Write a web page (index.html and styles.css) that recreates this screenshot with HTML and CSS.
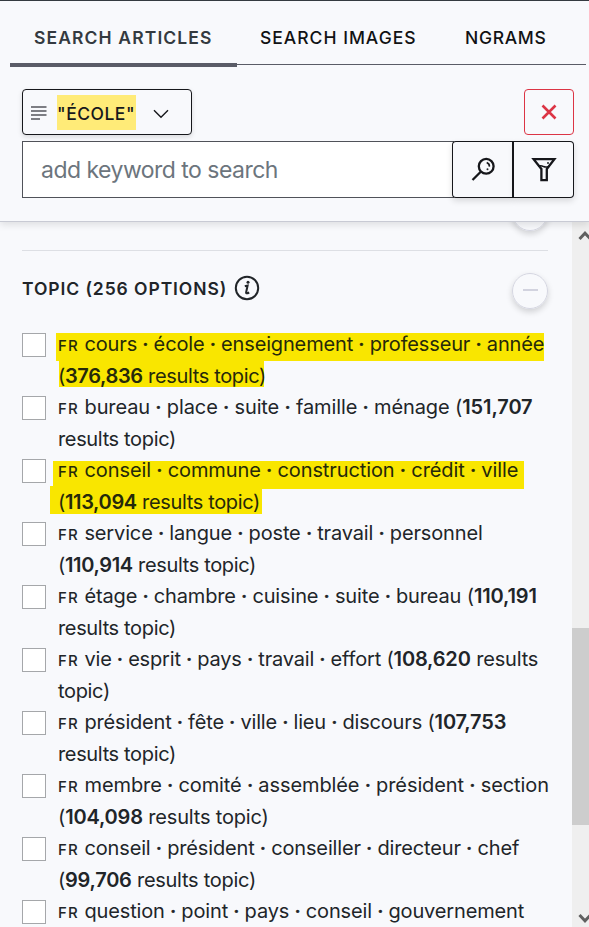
FILE: index.html
```html
<!DOCTYPE html>
<html lang="en">
<head>
<meta charset="utf-8">
<title>Search articles</title>
<link rel="stylesheet" href="styles.css">
</head>
<body>
<header class="header">
  <nav class="tabs">
    <a class="tab tab-active">SEARCH ARTICLES</a>
    <a class="tab tab-images">SEARCH IMAGES</a>
    <a class="tab tab-ngrams">NGRAMS</a>
  </nav>
  <div class="filters">
    <button class="pill">
      <svg class="pill-lines" width="16" height="14" viewBox="0 0 16 14"><path d="M0 1H15.5M0 5H15.5M0 9H15.5M0 13H9"/></svg>
      <span class="pill-text">"ÉCOLE"</span>
      <svg class="chevron" width="16" height="10" viewBox="0 0 16 10"><path d="M1 1.2L8 8.2L15 1.2"/></svg>
    </button>
    <button class="clear"><svg width="16" height="16" viewBox="0 0 16 16"><path d="M1.5 1.5L14.5 14.5M14.5 1.5L1.5 14.5"/></svg></button>
  </div>
  <div class="search">
    <div class="input">add keyword to search</div>
    <button class="action">
      <svg width="26" height="26" viewBox="0 0 26 26"><circle cx="16.2" cy="9.3" r="7.4"/><path d="M11 14.5L2.5 23"/><path class="fine" d="M16.7 5.4Q19.9 6.8 19.3 9.6"/><circle class="dot" cx="17.5" cy="12.3" r="1"/></svg>
    </button>
    <button class="action action-filter">
      <svg width="26" height="26" viewBox="0 0 26 26"><path d="M2.6 2.2H23.4L15.8 12V23.2H10.4V12Z"/><path class="fine" d="M7 9.2Q10 8 12.5 9.6Q15 10.6 18 9.4"/><circle class="dot" cx="17" cy="6" r="1"/></svg>
    </button>
  </div>
</header>
<div class="body">
  <main class="content">
    <div class="previous"><span class="round"></span></div>
    <div class="title-row">
      <h2 class="title">TOPIC (256 OPTIONS)</h2>
      <svg class="info" width="26" height="26" viewBox="0 0 26 26"><circle cx="13" cy="13" r="11.2"/><circle class="dot" cx="14" cy="7.3" r="1.5"/><path d="M10.8 11.2L13.6 10.5L12.1 17.5Q12 19.2 15.2 17.5"/></svg>
      <span class="round round-toggle"><i class="minus"></i></span>
    </div>
    <ul class="topics">
      <li class="topic"><i class="box"></i><div class="label marked-a"><span class="line"><small>FR</small> cours <i>·</i> école <i>·</i> enseignement <i>·</i> professeur <i>·</i> année</span><span class="line tight">(<b>376,836</b> results topic)</span></div></li>
      <li class="topic"><i class="box"></i><div class="label"><span class="line loose"><small>FR</small> bureau <i>·</i> place <i>·</i> suite <i>·</i> famille <i>·</i> ménage (<b>151,707</b></span><span class="line tight">results topic)</span></div></li>
      <li class="topic"><i class="box"></i><div class="label marked-b"><span class="line loose"><small>FR</small> conseil <i>·</i> commune <i>·</i> construction <i>·</i> crédit <i>·</i> ville</span><span class="line tight">(<b>113,094</b> results topic)</span></div></li>
      <li class="topic"><i class="box"></i><div class="label"><span class="line"><small>FR</small> service <i>·</i> langue <i>·</i> poste <i>·</i> travail <i>·</i> personnel</span><span class="line tight">(<b>110,914</b> results topic)</span></div></li>
      <li class="topic"><i class="box"></i><div class="label"><span class="line"><small>FR</small> étage <i>·</i> chambre <i>·</i> cuisine <i>·</i> suite <i>·</i> bureau (<b>110,191</b></span><span class="line tight">results topic)</span></div></li>
      <li class="topic"><i class="box"></i><div class="label"><span class="line snug"><small>FR</small> vie <i>·</i> esprit <i>·</i> pays <i>·</i> travail <i>·</i> effort (<b>108,620</b> results</span><span class="line tight">topic)</span></div></li>
      <li class="topic"><i class="box"></i><div class="label"><span class="line snug"><small>FR</small> président <i>·</i> fête <i>·</i> ville <i>·</i> lieu <i>·</i> discours (<b>107,753</b></span><span class="line tight">results topic)</span></div></li>
      <li class="topic"><i class="box"></i><div class="label"><span class="line loose"><small>FR</small> membre <i>·</i> comité <i>·</i> assemblée <i>·</i> président <i>·</i> section</span><span class="line snug">(<b>104,098</b> results topic)</span></div></li>
      <li class="topic"><i class="box"></i><div class="label"><span class="line"><small>FR</small> conseil <i>·</i> président <i>·</i> conseiller <i>·</i> directeur <i>·</i> chef</span><span class="line medium">(<b>99,706</b> results topic)</span></div></li>
      <li class="topic"><i class="box"></i><div class="label"><span class="line"><small>FR</small> question <i>·</i> point <i>·</i> pays <i>·</i> conseil <i>·</i> gouvernement</span></div></li>
    </ul>
  </main>
  <aside class="scrollbar">
    <svg class="arrow" width="17" height="12" viewBox="0 0 17 12"><path d="M7.5 10L13 4.2L18.5 10"/></svg>
    <div class="thumb"></div>
    <svg class="arrow arrow-down" width="17" height="12" viewBox="0 0 17 12"><path d="M7.5 3L13 8.8L18.5 3"/></svg>
  </aside>
</div>
</body>
</html>
```
FILE: styles.css
```css
* { box-sizing: border-box; }
body {
  margin: 0;
  height: 927px;
  overflow: hidden;
  display: flex;
  flex-direction: column;
  background: #f8f9fc;
  color: #212529;
  font-family: Inter, sans-serif;
}
svg { display: block; fill: none; stroke: #16171b; }
svg .dot { fill: #212529; stroke: none; }
button { font: inherit; color: inherit; margin: 0; padding: 0; background: #f8f9fc; }

.header {
  position: relative;
  z-index: 1;
  flex: none;
  height: 222px;
  padding-left: 10px;
  border-top: 1px solid #343a40;
  border-bottom: 1px solid #c8cad4;
  background: #f8f9fc;
  box-shadow: 0 3px 7px rgba(0, 0, 0, .1);
}
.tabs {
  display: flex;
  width: 576px;
  height: 64px;
  border-bottom: 1px solid #5a5c67;
  color: #111214;
  font-size: 17.5px;
  font-weight: 500;
  line-height: 74px;
  white-space: nowrap;
}
.tab { height: 66px; }
.tab-active {
  width: 227px;
  padding-left: 24px;
  border-bottom: 4px solid #5a5c67;
  color: #343a40;
  font-weight: 600;
  letter-spacing: 1.12px;
}
.tab-images { width: 204px; padding-left: 23px; letter-spacing: 1px; }
.tab-ngrams { padding-left: 24px; letter-spacing: .68px; }

.filters {
  display: flex;
  justify-content: space-between;
  margin: 24px 15px 0 12px;
}
.pill {
  display: flex;
  align-items: center;
  width: 170px;
  height: 46px;
  padding-left: 8px;
  border: 1px solid #16171b;
  border-radius: 4px;
  box-shadow: 0 2px 5px rgba(0, 0, 0, .13);
}
.pill-lines { margin-top: 2px; stroke: #54565c; stroke-width: 1.4; }
.pill-text {
  width: 79px;
  height: 35px;
  margin-left: 10px;
  background: #ffeb78;
  color: #16171b;
  font-size: 17.5px;
  font-weight: 500;
  line-height: 37px;
  letter-spacing: .5px;
  text-align: left;
}
.chevron { margin: 4px 0 0 17px; stroke-width: 1.4; }
.clear {
  display: grid;
  place-items: center;
  width: 50px;
  height: 46px;
  border: 1px solid #dc3545;
  border-radius: 4px;
}
.clear svg { stroke: #dc3545; stroke-width: 2.6; }

.search { display: flex; margin: 6px 15px 0 12px; }
.input {
  width: 432px;
  height: 57px;
  padding-left: 18px;
  border: 1px solid #505259;
  background: #fff;
  color: #6c757d;
  font-size: 23px;
  line-height: 56px;
  letter-spacing: -.52px;
}
.action {
  display: grid;
  place-items: center;
  width: 62px;
  height: 57px;
  margin-left: -2px;
  border: 1px solid #16171b;
  border-right-width: 2px;
  border-radius: 4px 0 0 4px;
  box-shadow: 0 3px 6px rgba(0, 0, 0, .13);
}
.action svg { stroke-width: 2.3; }
.action svg .fine { stroke-width: 1.6; }
.action-filter { width: 60px; margin-left: 0; border-left: 0; border-right-width: 1px; border-radius: 0 4px 4px 0; }

.body { display: flex; flex: 1; min-height: 0; }
.content { width: 572px; padding: 0 24px 0 22px; overflow: hidden; }
.previous {
  display: flex;
  align-items: flex-end;
  justify-content: flex-end;
  height: 29px;
  padding-bottom: 19px;
  border-bottom: 1px solid #dddfe4;
}
.round {
  flex: none;
  display: grid;
  place-items: center;
  width: 36px;
  height: 36px;
  border: 1px solid #d5d6e1;
  border-radius: 50%;
  box-shadow: 0 3px 6px rgba(0, 0, 0, .16);
}
.round-toggle { margin-left: auto; margin-top: 6px; }
.minus { width: 15px; height: 2px; margin-top: -2px; background: #d2d3df; }
.title-row { display: flex; align-items: center; height: 74px; }
.title {
  margin: 0;
  width: 212px;
  font-size: 17.5px;
  font-weight: 600;
  letter-spacing: .92px;
  white-space: nowrap;
}
.info { stroke: #212529; stroke-width: 2; }

.topics { list-style: none; margin: 4px 0 0; padding: 0; }
.topic { display: flex; height: 63px; }
.box {
  flex: none;
  width: 24px;
  height: 24px;
  margin-top: 4px;
  border: 1px solid #a5a7aa;
  background: #fff;
}
.label {
  position: relative;
  z-index: 0;
  width: 490px;
  margin-left: 12px;
  font-size: 20px;
  line-height: 31px;
}
.label small { font-size: 15px; font-weight: 500; letter-spacing: 1.2px; }
.label b { font-weight: 600; }
.label i { font-style: normal; -webkit-text-stroke: .7px; }
.line { display: block; white-space: nowrap; letter-spacing: -.148px; }
.loose { letter-spacing: -.1px; }
.snug { letter-spacing: -.175px; }
.medium { letter-spacing: -.27px; }
.tight { letter-spacing: -.35px; }

/* highlighter strokes behind the two selected topics */
.marked-a, .marked-b { color: #25290a; }
.marked-a::before, .marked-a::after,
.marked-b::before, .marked-b::after {
  content: "";
  position: absolute;
  z-index: -1;
  background: #f9e600;
}
.marked-a::before { left: -2px; top: 4px; width: 488px; height: 28px; }
.marked-a::after { left: 1px; top: 31px; width: 205px; height: 27px; }
.marked-b::before { left: -5px; top: 6px; width: 471px; height: 28px; }
.marked-b::after { left: -8px; top: 31px; width: 212px; height: 28px; }

.scrollbar {
  display: flex;
  flex-direction: column;
  width: 17px;
  background: #efefef;
}
.arrow { flex: none; margin-top: 7px; stroke: #606060; stroke-width: 3; }
.thumb { flex: none; height: 197px; margin-top: 387px; background: #cdcdcd; }
.arrow-down { margin-top: auto; margin-bottom: 3px; }
```
